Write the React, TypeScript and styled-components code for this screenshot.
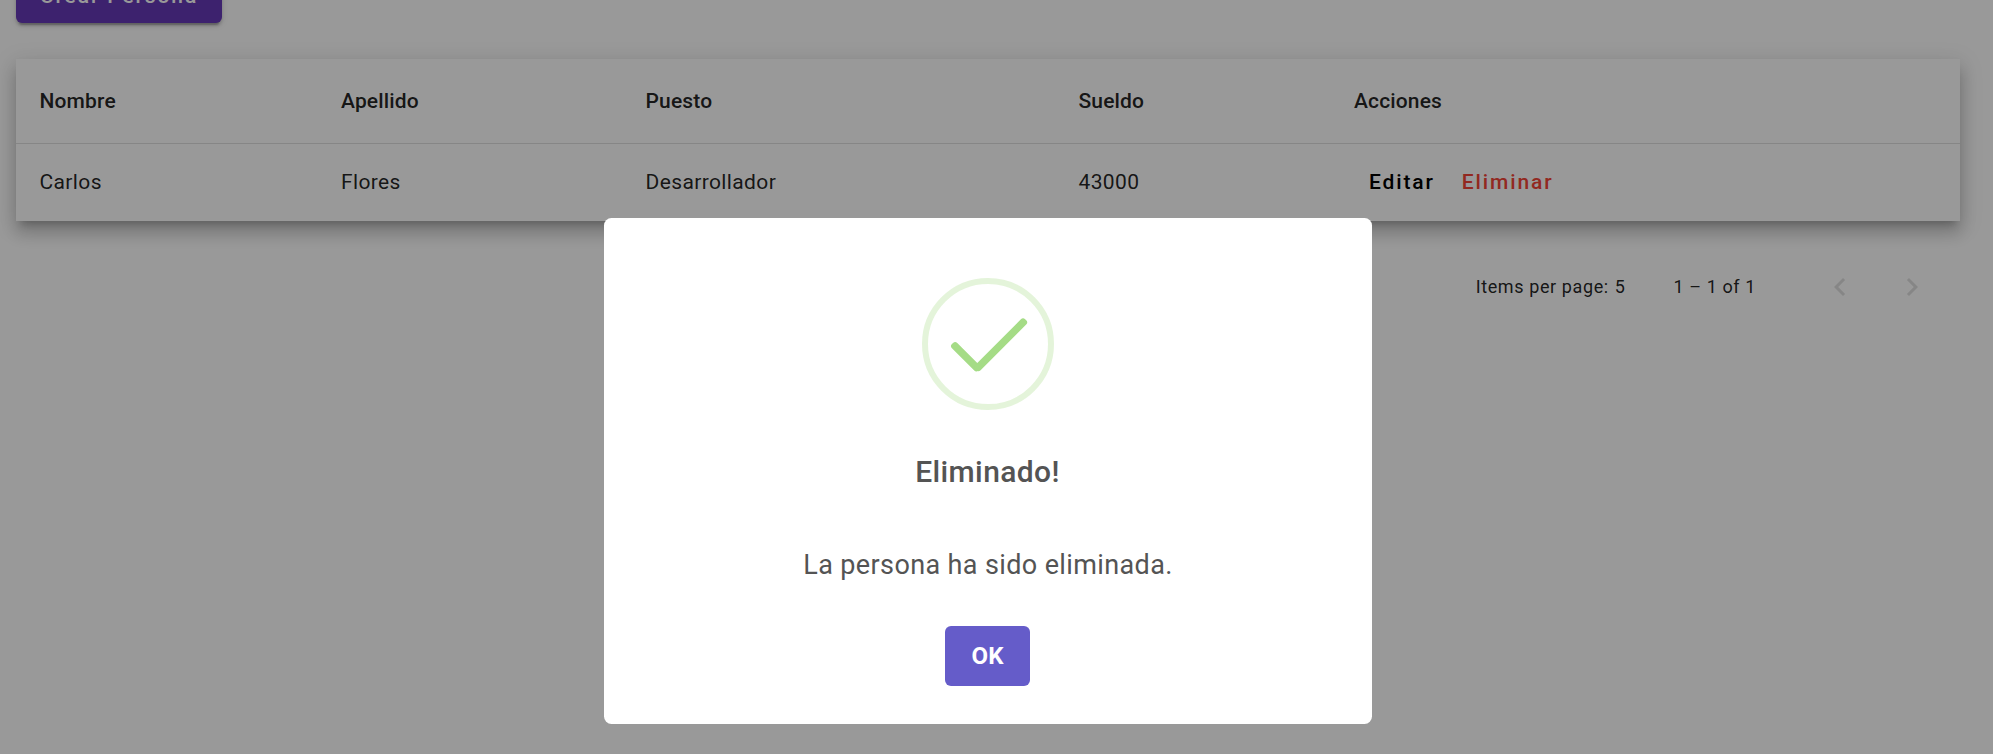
import React from "react";
import styled, { createGlobalStyle } from "styled-components";

const GlobalStyle = createGlobalStyle`
  *, *::before, *::after { box-sizing: border-box; }
  html, body { margin: 0; height: 100%; overflow: hidden; background: #fff; }
  body { font-family: Roboto, "Liberation Sans", sans-serif; }
`;

const Page = styled.main`
  height: 754px;
  padding: 0 33px 0 16px;
  display: flex;
  flex-direction: column;
  align-items: stretch;
  overflow: hidden;
`;

const CreateButton = styled.button`
  flex: none;
  align-self: flex-start;
  width: 206px;
  height: 54px;
  margin: -31px 0 36px;
  padding: 1px 0 0;
  border: 0;
  border-radius: 6px;
  background: #673ab7;
  color: #fff;
  font: 500 21px/53px Roboto, sans-serif;
  letter-spacing: 1.875px;
  white-space: nowrap;
  box-shadow: 0 4.5px 1.5px -3px rgba(0, 0, 0, 0.2), 0 3px 3px rgba(0, 0, 0, 0.14),
    0 1.5px 7.5px rgba(0, 0, 0, 0.12);
`;

const Table = styled.table`
  flex: none;
  width: 1944px;
  table-layout: fixed;
  border-collapse: separate;
  border-spacing: 0;
  background: #fff;
  box-shadow: 0 7.5px 7.5px -4.5px rgba(0, 0, 0, 0.2), 0 12px 15px 1.5px rgba(0, 0, 0, 0.14),
    0 4.5px 21px 3px rgba(0, 0, 0, 0.12);
`;

const Column = styled.col<{ $width: number }>`
  width: ${(p) => p.$width}px;
`;

const HeaderCell = styled.th`
  height: 85px;
  padding: 0 24px;
  border-bottom: 1px solid rgba(0, 0, 0, 0.12);
  text-align: left;
  color: rgba(0, 0, 0, 0.87);
  font: 500 21px/33px Roboto, sans-serif;
  letter-spacing: 0.15px;

  &:first-child {
    padding-left: 23.5px;
  }
`;

const Cell = styled.td`
  height: 77px;
  padding: 0 24px 2px;
  color: rgba(0, 0, 0, 0.87);
  font: 400 21px/30px Roboto, sans-serif;
  letter-spacing: 0.375px;

  &:first-child {
    padding-left: 23.5px;
  }
`;

const RowButton = styled.button<{ $color: string }>`
  height: 54px;
  padding: 0 12px;
  border: 0;
  background: transparent;
  color: ${(p) => p.$color};
  font: 500 21px/54px Roboto, sans-serif;
  letter-spacing: 1.875px;
`;

const Actions = styled.div`
  display: flex;
  gap: 3px;
  padding-left: 3px;
`;

const Paginator = styled.div`
  height: 84px;
  margin-top: 24px;
  padding-right: 12px;
  width: 1944px;
  display: flex;
  align-items: center;
  justify-content: flex-end;
  color: rgba(0, 0, 0, 0.87);
  font: 400 18px/30px Roboto, sans-serif;
  letter-spacing: 0.6px;
`;

const PageSize = styled.div`
  display: flex;
  gap: 6px;
`;

const Range = styled.div`
  margin: 0 48px 0 48px;
`;

const PageButton = styled.button`
  width: 72px;
  height: 72px;
  padding: 0;
  border: 0;
  background: transparent;
  display: flex;
  align-items: center;
  justify-content: center;
  color: rgba(0, 0, 0, 0.12);
`;

const Backdrop = styled.div`
  position: fixed;
  inset: 0;
  padding: 218px 17px 0 0;
  display: flex;
  justify-content: center;
  align-items: flex-start;
  background: rgba(0, 0, 0, 0.4);
`;

const Dialog = styled.section`
  width: 768px;
  height: 506px;
  display: flex;
  flex-direction: column;
  align-items: center;
  border-radius: 7.5px;
  background: #fff;
  color: #545454;
`;

const SuccessIcon = styled.svg`
  flex: none;
  margin-top: 60px;
`;

const Title = styled.h2`
  margin: 38px 1px 0 0;
  font: 500 30px/48px Roboto, sans-serif;
  letter-spacing: 0.375px;
`;

const Message = styled.p`
  margin: 51px 0 0;
  font: 400 27px/36px Roboto, sans-serif;
  letter-spacing: 0.375px;
`;

const ConfirmButton = styled.button`
  width: 85px;
  height: 60px;
  margin: 43px 1px 0 0;
  padding: 0;
  border: 0;
  border-radius: 6px;
  background: #655cc9;
  color: #fff;
  font: 700 24px/60px Roboto, sans-serif;
`;

const columns = [
  { label: "Nombre", width: 301 },
  { label: "Apellido", width: 304.5 },
  { label: "Puesto", width: 433 },
  { label: "Sueldo", width: 275.5 },
  { label: "Acciones", width: 630 },
];

const people = [["Carlos", "Flores", "Desarrollador", "43000"]];

function Chevron({ d }: { d: string }) {
  return (
    <svg width="36" height="36" viewBox="0 0 24 24" fill="currentColor">
      <path d={d} />
    </svg>
  );
}

export default function App() {
  return (
    <>
      <GlobalStyle />
      <Page>
        <CreateButton>Crear Persona</CreateButton>
        <Table>
          <colgroup>
            {columns.map((c) => (
              <Column key={c.label} $width={c.width} />
            ))}
          </colgroup>
          <thead>
            <tr>
              {columns.map((c) => (
                <HeaderCell key={c.label}>{c.label}</HeaderCell>
              ))}
            </tr>
          </thead>
          <tbody>
            {people.map((person) => (
              <tr key={person[0]}>
                {person.map((value) => (
                  <Cell key={value}>{value}</Cell>
                ))}
                <Cell>
                  <Actions>
                    <RowButton $color="#000">Editar</RowButton>
                    <RowButton $color="#f44336">Eliminar</RowButton>
                  </Actions>
                </Cell>
              </tr>
            ))}
          </tbody>
        </Table>
        <Paginator>
          <PageSize>
            <span>Items per page:</span>
            <span>5</span>
          </PageSize>
          <Range>1 – 1 of 1</Range>
          <PageButton aria-label="Previous page">
            <Chevron d="M15.41 7.41L14 6l-6 6 6 6 1.41-1.41L10.83 12z" />
          </PageButton>
          <PageButton aria-label="Next page">
            <Chevron d="M10 6L8.59 7.41 13.17 12l-4.58 4.59L10 18l6-6z" />
          </PageButton>
        </Paginator>
      </Page>
      <Backdrop>
        <Dialog role="dialog">
          <SuccessIcon width="132" height="132" viewBox="0 0 132 132">
            <circle cx="66" cy="66" r="63" fill="none" stroke="#a5dc86" strokeOpacity="0.3" strokeWidth="6" />
            <g fill="#a5dc86">
              <rect x="25" y="75" width="37.5" height="7.5" rx="3" transform="rotate(45 43.75 78.75)" />
              <rect x="43.5" y="63" width="70.5" height="7.5" rx="3" transform="rotate(-45 78.75 66.75)" />
            </g>
          </SuccessIcon>
          <Title>Eliminado!</Title>
          <Message>La persona ha sido eliminada.</Message>
          <ConfirmButton>OK</ConfirmButton>
        </Dialog>
      </Backdrop>
    </>
  );
}
